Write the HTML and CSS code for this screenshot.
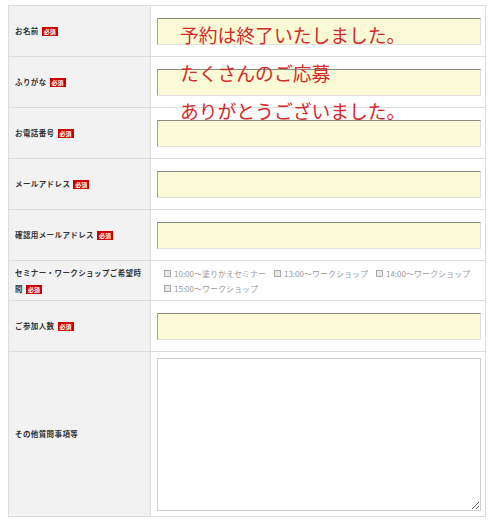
FILE: index.html
```html
<!DOCTYPE html>
<html>
<head>
    <meta charset="utf-8" />
    <title>form</title>
    <meta name="viewport" content="width=device-width, initial-scale=1">
    <link rel="stylesheet" href="styles.css">
</head>
<body>
    <div class="container">
        <form>
            <table class="entry">
                <tr>
                    <th>お名前<span class="req">必須</span></th>
                    <td><input type="text" class="field"/></td>
                </tr>
                <tr>
                    <th>ふりがな<span class="req">必須</span></th>
                    <td><input type="text" class="field"/></td>
                </tr>
                <tr>
                    <th>お電話番号<span class="req">必須</span></th>
                    <td><input type="text" class="field"/></td>
                </tr>
                <tr>
                    <th>メールアドレス<span class="req">必須</span></th>
                    <td><input type="text" class="field"/></td>
                </tr>
                <tr>
                    <th>確認用メールアドレス<span class="req">必須</span></th>
                    <td><input type="text" class="field"/></td>
                </tr>
                <tr class="times">
                    <th>セミナー・ワークショップご希望時<br>間<span class="req">必須</span></th>
                    <td>
                        <div class="opts">
                            <label><input type="checkbox"/>10:00～塗りかえセミナー</label>
                            <label><input type="checkbox"/>13:00～ワークショップ</label>
                            <label><input type="checkbox"/>14:00～ワークショップ</label>
                            <label><input type="checkbox"/>15:00～ワークショップ</label>
                        </div>
                    </td>
                </tr>
                <tr>
                    <th>ご参加人数<span class="req">必須</span></th>
                    <td><input type="text" class="field"/></td>
                </tr>
                <tr class="memo">
                    <th>その他質問事項等</th>
                    <td><textarea></textarea></td>
                </tr>
            </table>
        </form>
        <!-- 受付終了のお知らせ -->
        <p class="closed">予約は終了いたしました。<br>たくさんのご応募<br>ありがとうございました。</p>
    </div>
</body>
</html>
```

FILE: styles.css
```css
* {
    margin: 0;
    padding: 0;
    box-sizing: border-box;
}
body {
    background: #fff;
    font-family: "Noto Sans CJK JP", "Noto Sans", sans-serif;
    color: #333;
}
.container {
    position: relative;
    padding: 5px 8px;
}
.entry {
    width: 478px;
    border-collapse: collapse;
}
.entry th,
.entry td {
    border: 1px solid #ddd;
    vertical-align: middle;
}
.entry th {
    width: 143px;
    background: #f2f2f2;
    padding: 0 6px;
    text-align: left;
    font-size: 7.5px;
    font-weight: bold;
    letter-spacing: .4px;
    line-height: 16px;
}
.entry td {
    padding: 12px 4px 11px 6px;
    height: 50.4px;
}
.req {
    display: inline-block;
    margin-left: 3px;
    padding: 0 2px;
    background: #c00;
    color: #fff;
    font-size: 6px;
    line-height: 9px;
    letter-spacing: 0;
    vertical-align: middle;
}
.field {
    display: block;
    width: 324px;
    height: 27px;
    background: #fafad7;
    border: 1px solid #e2e2e2;
    border-top-color: #8a8a80;
    border-left-color: #a0a0a0;
}
.times td {
    height: 40px;
    padding: 4px 6px;
}
.opts {
    display: flex;
    flex-wrap: wrap;
    column-gap: 1px;
    font-size: 8px;
    line-height: 15px;
    color: #999;
}
.opts label {
    display: flex;
    align-items: center;
    white-space: nowrap;
}
.opts input {
    appearance: none;
    width: 7px;
    height: 7px;
    margin: 0 3px 0 7px;
    border: 1px solid #aaa;
    background: #e8e8e8;
}
.memo td {
    height: 165px;
    padding: 6px 4px 5px 6px;
}
textarea {
    display: block;
    width: 324px;
    height: 153px;
    border: 1px solid #d0d0d0;
    background: #fff;
}
.closed {
    position: absolute;
    left: 180px;
    top: 16px;
    font-size: 18.8px;
    line-height: 38px;
    color: #d42a2a;
}
```
